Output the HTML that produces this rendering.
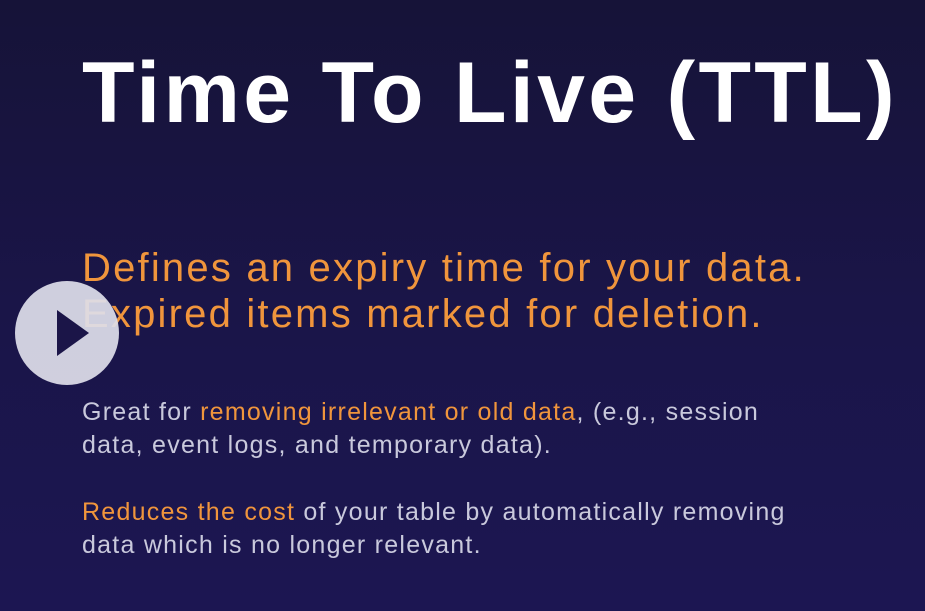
<!DOCTYPE html>
<html><head><style>
html,body{margin:0;padding:0}
body{width:925px;height:611px;overflow:hidden;background:linear-gradient(180deg,#161338 0%,#1a1548 50%,#1c1652 100%);font-family:"Liberation Sans",sans-serif;position:relative}
.t{position:absolute;left:82px;top:44px;font-size:86px;font-weight:bold;color:#fff;letter-spacing:3.3px;white-space:nowrap}
.o{position:absolute;left:82px;top:245px;font-size:40px;color:#f0953c;line-height:46px;white-space:nowrap;letter-spacing:2.2px}
.g{position:absolute;left:82px;font-size:25px;color:#c9c9dc;line-height:33px;white-space:nowrap;letter-spacing:1.25px}
.g span{color:#f0953c}
.play{position:absolute;left:15px;top:281px;width:104px;height:104px;border-radius:50%;background:rgba(222,222,234,0.93)}
</style></head><body>
<div class="t">Time To Live (TTL)</div>
<div class="o">Defines an expiry time for your data.<br>Expired items marked for deletion.</div>
<div class="g" style="top:396px">Great for <span>removing irrelevant or old data</span>, (e.g., session<br>data, event logs, and temporary data).</div>
<div class="g" style="top:496px"><span>Reduces the cost</span> of your table by automatically removing<br>data which is no longer relevant.</div>
<div class="play"><svg width="104" height="104" style="position:absolute;left:0;top:0"><path d="M42 29 L74 52 L42 75 Z" fill="#1b1548"/></svg></div>
</body></html>
